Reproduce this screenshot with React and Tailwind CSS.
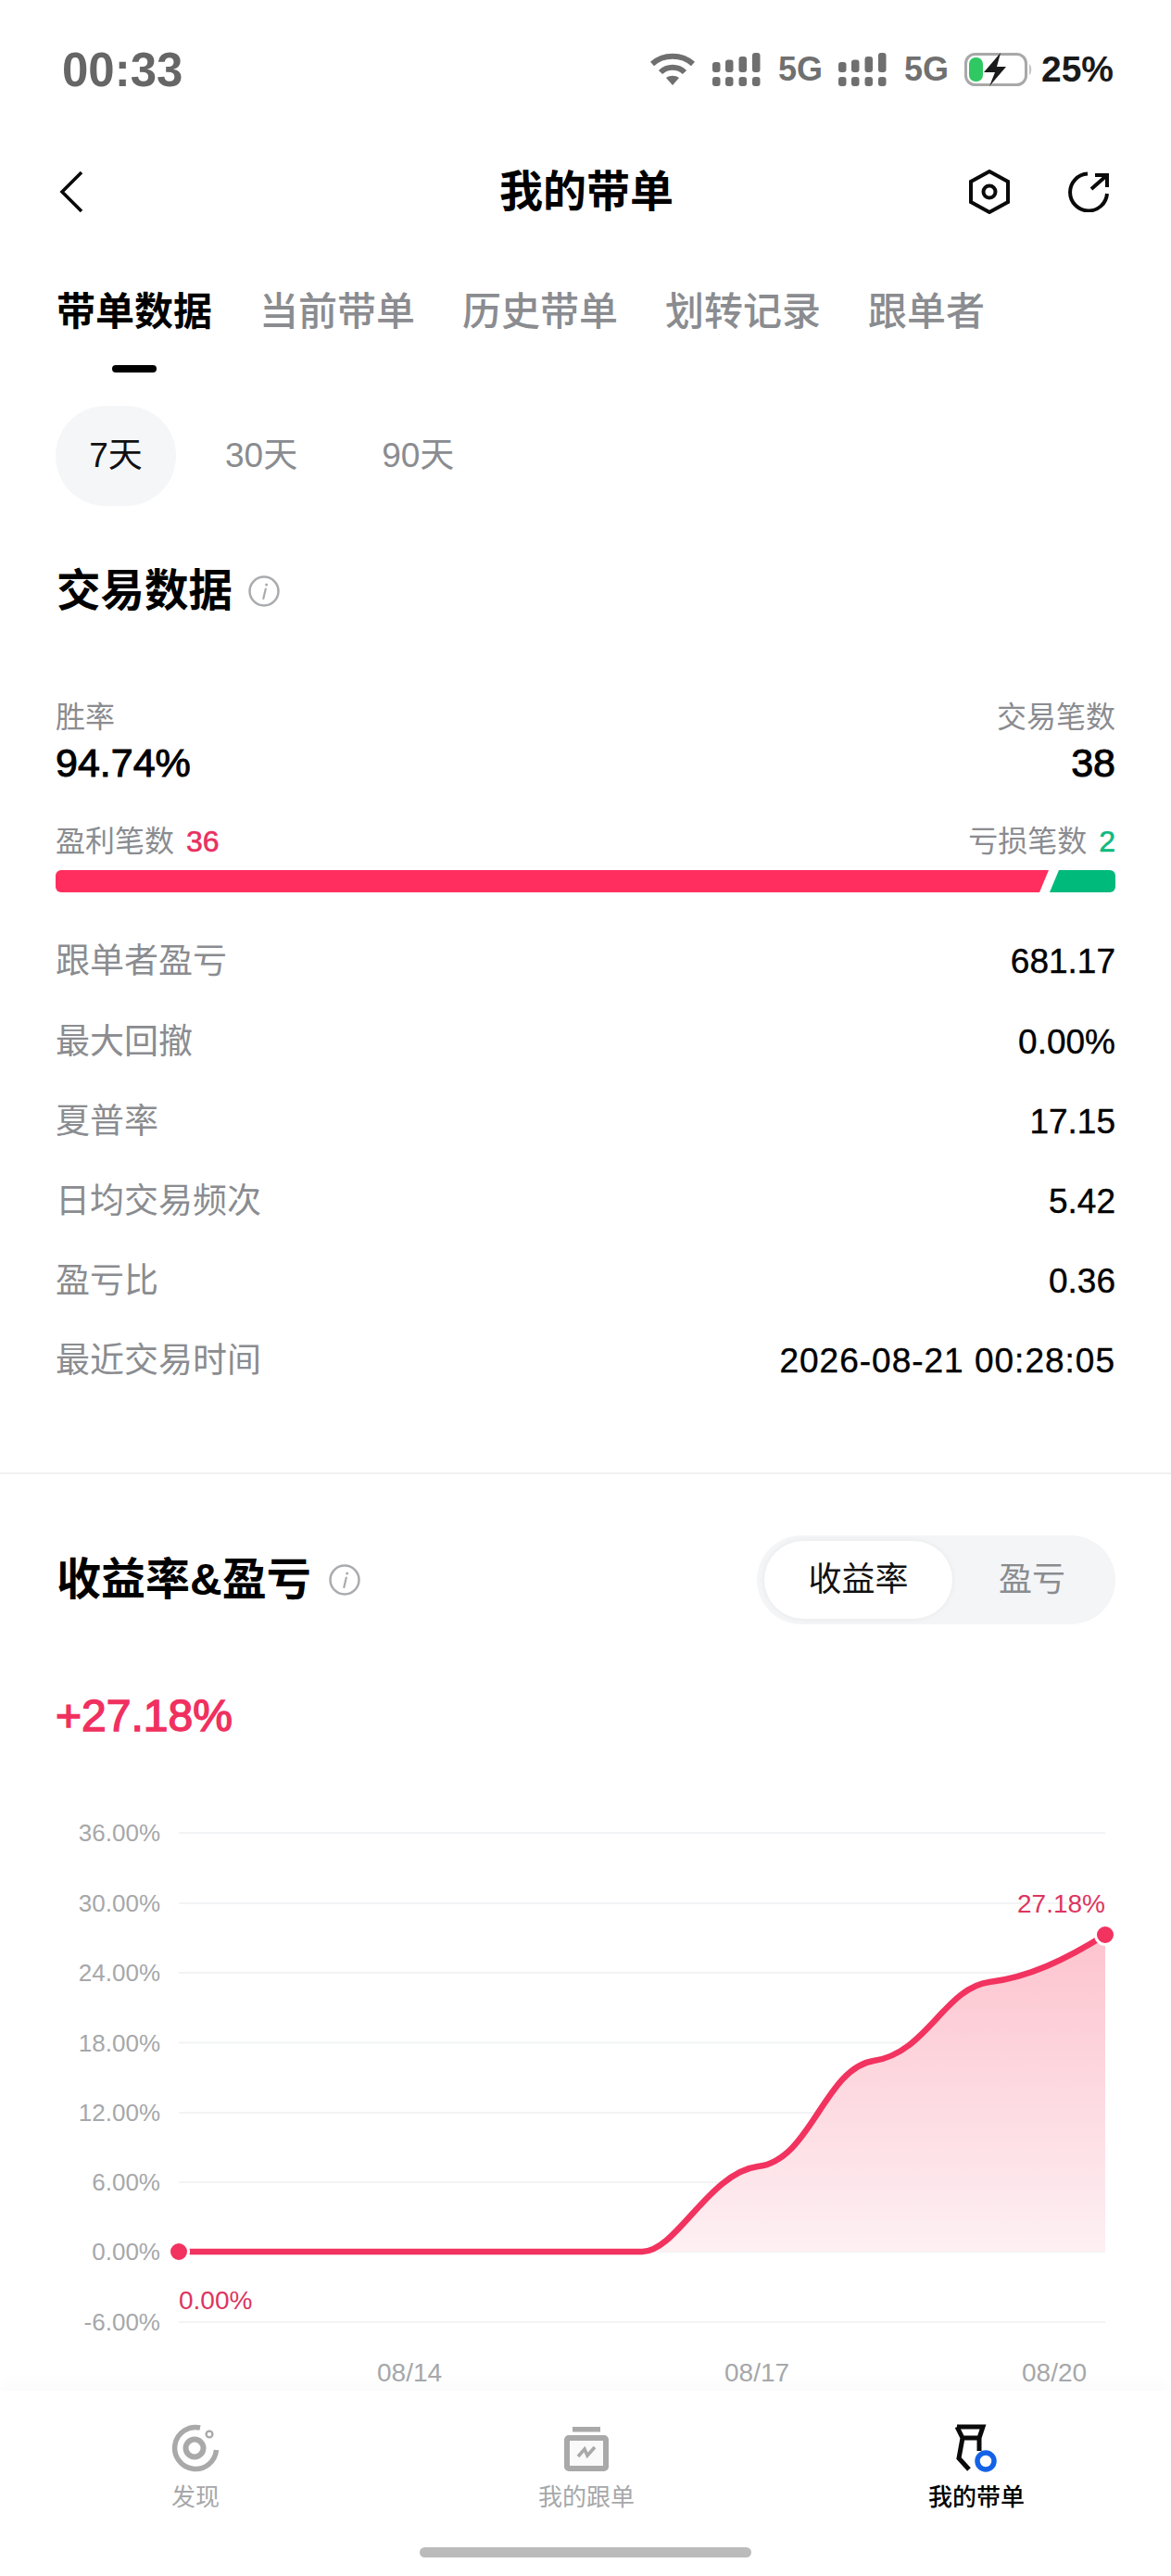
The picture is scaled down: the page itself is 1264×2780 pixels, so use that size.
import React from "react";

const rows = [
  ["跟单者盈亏", "681.17"],
  ["最大回撤", "0.00%"],
  ["夏普率", "17.15"],
  ["日均交易频次", "5.42"],
  ["盈亏比", "0.36"],
  ["最近交易时间", "2026-08-21 00:28:05"],
];

const yLabels = [
  ["36.00%", 1978],
  ["30.00%", 2054],
  ["24.00%", 2129],
  ["18.00%", 2204.5],
  ["12.00%", 2280],
  ["6.00%", 2355],
  ["0.00%", 2430],
  ["-6.00%", 2506],
];

const rise = "C730 2430 765 2345 818 2338 C875 2332 890 2232 943 2224 C1000 2216 1020 2145 1068 2139 C1110 2134 1150 2115 1193 2088";

function Signal() {
  const bars = [
    [0, 10],
    [14, 7.5],
    [28.5, 4],
    [43, 0],
  ];
  return (
    <svg width="52" height="36" viewBox="0 0 52 36" fill="#6f6f6f">
      {bars.map(([x, top]) => (
        <g key={x}>
          <rect x={x} y={top} width="8.5" height={21 - top} rx="3" />
          <rect x={x} y="26" width="8.5" height="10" rx="3" />
        </g>
      ))}
    </svg>
  );
}

function Wifi() {
  return (
    <svg width="48" height="36" viewBox="0 0 48 36" fill="none" stroke="#6f6f6f">
      <path d="M2 12 C14 1 34 1 46 12" strokeWidth="6" />
      <path d="M11 21 C18 14 30 14 37 21" strokeWidth="6" />
      <path d="M17 27 C21 24 27 24 31 27 L24 35 Z" fill="#6f6f6f" stroke="none" />
    </svg>
  );
}

function Battery() {
  return (
    <svg width="75" height="36" viewBox="0 0 75 36">
      <rect x="1.5" y="1.5" width="65" height="33" rx="10" fill="none" stroke="#a8a8a8" strokeWidth="3" />
      <rect x="5" y="5" width="15" height="26" rx="7" fill="#2fc862" />
      <path d="M39 0 L21 21 L33 21 L27 36 L45 15 L35 15 Z" fill="#1a1a1a" />
      <path d="M70 12 C73 14 73 22 70 24 Z" fill="#c4c4c4" />
    </svg>
  );
}

function Info() {
  return (
    <svg width="34" height="34" viewBox="0 0 34 34" fill="none">
      <circle cx="17" cy="17" r="15.5" stroke="#a9abae" strokeWidth="2.5" />
      <path d="M18.8 14.5 L16.3 25" stroke="#a9abae" strokeWidth="2.2" strokeLinecap="round" />
      <circle cx="19.6" cy="10" r="1.5" fill="#a9abae" />
    </svg>
  );
}

function Chart() {
  return (
    <svg className="block" width="1264" height="698" viewBox="0 1882 1264 698">
      <defs>
        <linearGradient id="area" x1="0" y1="2088" x2="0" y2="2430" gradientUnits="userSpaceOnUse">
          <stop offset="0" stopColor="#fdc3ce" />
          <stop offset="1" stopColor="#fdf0f3" />
        </linearGradient>
      </defs>
      {yLabels.map(([label, y]) => (
        <g key={label}>
          <line x1="193" x2="1193" y1={y} y2={y} stroke="#f2f3f4" strokeWidth="2" />
          <text x="173" y={y + 9} textAnchor="end" fontSize="26" fill="#a6a8aa">
            {label}
          </text>
        </g>
      ))}
      <path d={`M693 2430 ${rise} L1193 2430 Z`} fill="url(#area)" />
      <path d={`M193 2430 L693 2430 ${rise}`} fill="none" stroke="#f2325f" strokeWidth="6.5" />
      <circle cx="193" cy="2430" r="10.5" fill="#f2325f" stroke="#fff" strokeWidth="3" />
      <circle cx="1193" cy="2088" r="10.5" fill="#f2325f" stroke="#fff" strokeWidth="3" />
      <text x="1193" y="2064" textAnchor="end" fontSize="28" fill="#dd3560">
        27.18%
      </text>
      <text x="193" y="2492" fontSize="28" fill="#dd3560">
        0.00%
      </text>
      <text x="407" y="2570" fontSize="28" fill="#a6a8aa">
        08/14
      </text>
      <text x="782" y="2570" fontSize="28" fill="#a6a8aa">
        08/17
      </text>
      <text x="1103" y="2570" fontSize="28" fill="#a6a8aa">
        08/20
      </text>
    </svg>
  );
}

function NavDiscover() {
  return (
    <svg width="52" height="52" viewBox="0 0 52 52" fill="none" stroke="#a9a9a9">
      <path d="M31 4 A22.5 22.5 0 1 0 48.5 28" strokeWidth="5.5" />
      <circle cx="25" cy="26" r="9.5" strokeWidth="6" />
      <circle cx="41" cy="11" r="3.4" strokeWidth="2.4" />
    </svg>
  );
}

function NavFollow() {
  return (
    <svg width="48" height="52" viewBox="0 0 48 52" fill="none">
      <rect x="9" y="3" width="30" height="5.5" fill="#a9a9a9" />
      <rect x="3" y="15" width="42" height="33" rx="2" fill="#fafafa" stroke="#a9a9a9" strokeWidth="6" />
      <path d="M15 35 L22 27 L25 34 L33 25" stroke="#a9a9a9" strokeWidth="3.6" />
    </svg>
  );
}

function NavLead() {
  return (
    <svg width="46" height="52" viewBox="0 0 46 52" fill="none">
      <path
        d="M2 3 L30 3 L26 15 L26 29 M2 3 L8 15 L26 15 M8 15 L4 37 L15 49"
        stroke="#0a0a0a"
        strokeWidth="5"
        strokeLinejoin="miter"
      />
      <circle cx="33" cy="40" r="9" stroke="#1463e6" strokeWidth="5.5" fill="#fff" />
    </svg>
  );
}

function NavItem({ icon, label, active }) {
  return (
    <div className="flex flex-col items-center">
      <div className="h-[52px] flex items-center justify-center">{icon}</div>
      <div className={`mt-[10px] h-[34px] text-[26px] leading-[34px] ${active ? "font-medium text-black" : "text-[#a6a8aa]"}`}>
        {label}
      </div>
    </div>
  );
}

export default function App() {
  return (
    <div className="w-[1264px] h-[2780px] bg-white overflow-hidden font-['Liberation_Sans','Noto_Sans_CJK_SC',sans-serif]">
      {/* status bar */}
      <div className="h-[150px] pl-[67px] pr-[62px] flex items-center justify-between">
        <span className="mt-[2px] text-[51px] font-bold text-[#666]">00:33</span>
        <div className="flex items-center">
          <Wifi />
          <div className="ml-[19px]"><Signal /></div>
          <span className="ml-[19px] text-[36px] font-bold text-[#707070]">5G</span>
          <div className="ml-[17px]"><Signal /></div>
          <span className="ml-[19px] text-[36px] font-bold text-[#707070]">5G</span>
          <div className="ml-[17px]"><Battery /></div>
          <span className="ml-[8px] text-[39px] font-bold text-[#1a1a1a]">25%</span>
        </div>
      </div>

      {/* title bar */}
      <div className="h-[114px] pl-[64px] pr-[67px] flex items-center justify-between relative">
        <svg width="26" height="46" viewBox="0 0 26 46" fill="none">
          <path d="M24 2 L3 23 L24 44" stroke="#0a0a0a" strokeWidth="3.6" />
        </svg>
        <h1 className="absolute left-[539px] text-[47px] leading-[60px] font-bold text-black">我的带单</h1>
        <div className="flex items-center gap-[63px]">
          <svg width="44" height="48" viewBox="0 0 44 48" fill="none" stroke="#0a0a0a" strokeWidth="4">
            <path d="M22 2 L42 13 L42 35 L22 46 L2 35 L2 13 Z" />
            <circle cx="22" cy="24" r="6.5" />
          </svg>
          <svg width="44" height="44" viewBox="0 0 44 44" fill="none" stroke="#0a0a0a" strokeWidth="4">
            <path d="M21 2.5 A20 20 0 1 0 42 24" />
            <path d="M25 19 L42 4 M29 4 L42 4 L42 17" />
          </svg>
        </div>
      </div>

      {/* tabs */}
      <div className="pl-[61px] pt-[50px] flex gap-[51px] text-[42px] leading-[46px]">
        <div className="flex flex-col items-center">
          <span className="font-bold text-black">带单数据</span>
          <span className="mt-[34px] w-[48px] h-[8px] rounded-full bg-black"></span>
        </div>
        <span className="font-medium text-[#8a8c90]">当前带单</span>
        <span className="font-medium text-[#8a8c90]">历史带单</span>
        <span className="font-medium text-[#8a8c90]">划转记录</span>
        <span className="font-medium text-[#8a8c90]">跟单者</span>
      </div>

      {/* period */}
      <div className="mt-[36px] pl-[60px] flex items-center h-[108px] text-[37px]">
        <div className="w-[130px] h-[108px] rounded-[54px] bg-[#f5f6f8] flex items-center justify-center text-[#111]">7天</div>
        <span className="ml-[53px] text-[#8a8c90]">30天</span>
        <span className="ml-[91px] text-[#8a8c90]">90天</span>
      </div>

      <div className="px-[60px]">
        <div className="mt-[69px] h-[46px] flex items-center">
          <h2 className="ml-[1px] text-[47.5px] leading-[46px] font-bold text-black">交易数据</h2>
          <div className="ml-[17px]"><Info /></div>
        </div>

        <div className="mt-[93px] flex justify-between">
          <div>
            <div className="h-[40px] text-[32px] leading-[40px] text-[#8a8c90]">胜率</div>
            <div className="mt-[4px] h-[50px] text-[43px] leading-[50px] text-black [-webkit-text-stroke:1px]">94.74%</div>
          </div>
          <div className="text-right">
            <div className="h-[40px] text-[32px] leading-[40px] text-[#8a8c90]">交易笔数</div>
            <div className="mt-[4px] h-[50px] text-[43px] leading-[50px] text-black [-webkit-text-stroke:1px]">38</div>
          </div>
        </div>

        <div className="mt-[40px] h-[40px] flex justify-between text-[32px] leading-[40px] text-[#8a8c90]">
          <div>盈利笔数<span className="ml-[13px] text-[#e8305f] [-webkit-text-stroke:0.6px]">36</span></div>
          <div>亏损笔数<span className="ml-[13px] text-[#10b981] [-webkit-text-stroke:0.6px]">2</span></div>
        </div>

        <div className="mt-[11px] h-[24px] flex">
          <div className="w-[1072px] bg-[#ff2e5f] rounded-l-[6px] [clip-path:polygon(0_0,100%_0,calc(100%-10px)_100%,0_100%)]"></div>
          <div className="ml-[1px] flex-1 bg-[#00ba7c] rounded-r-[6px] [clip-path:polygon(10px_0,100%_0,100%_100%,0_100%)]"></div>
        </div>

        <div className="mt-[32px]">
          {rows.map(([label, value]) => (
            <div key={label} className="h-[86.2px] flex items-center justify-between">
              <span className="text-[37px] text-[#8a8c90]">{label}</span>
              <span className={`text-[37px] text-black [-webkit-text-stroke:0.4px] ${value.length > 10 ? "tracking-[1px]" : ""}`}>{value}</span>
            </div>
          ))}
        </div>
      </div>

      <div className="mt-[77px] h-[2px] bg-[#f0f1f2]"></div>

      <div className="mt-[66px] px-[60px] h-[96px] flex items-center justify-between">
        <div className="flex items-center">
          <h2 className="ml-[1px] text-[48px] leading-[46px] font-bold text-black">收益率&amp;盈亏</h2>
          <div className="ml-[19px]"><Info /></div>
        </div>
        <div className="w-[387px] h-[96px] rounded-[48px] bg-[#f4f5f7] flex items-center pl-[8px]">
          <div className="w-[203px] h-[84px] rounded-[42px] bg-white shadow-[0_0_6px_rgba(0,0,0,0.06)] flex items-center justify-center text-[36px] text-[#111]">
            收益率
          </div>
          <span className="ml-[50px] text-[36px] text-[#8a8c90]">盈亏</span>
        </div>
      </div>

      <div className="mt-[69px] px-[60px] h-[60px] text-[48px] leading-[60px] text-[#f0305f] [-webkit-text-stroke:1.5px]">+27.18%</div>

      <Chart />

      {/* bottom nav */}
      <div className="relative h-[200px] bg-white shadow-[0_-8px_14px_rgba(0,0,0,0.02)] pt-[36px]">
        <div className="grid grid-cols-[422px_422px_420px]">
          <NavItem icon={<NavDiscover />} label="发现" />
          <NavItem icon={<NavFollow />} label="我的跟单" />
          <NavItem icon={<NavLead />} label="我的带单" active />
        </div>
        <div className="mt-[37px] mx-auto w-[358px] h-[11px] rounded-full bg-[#bbbbbb]"></div>
      </div>
    </div>
  );
}
